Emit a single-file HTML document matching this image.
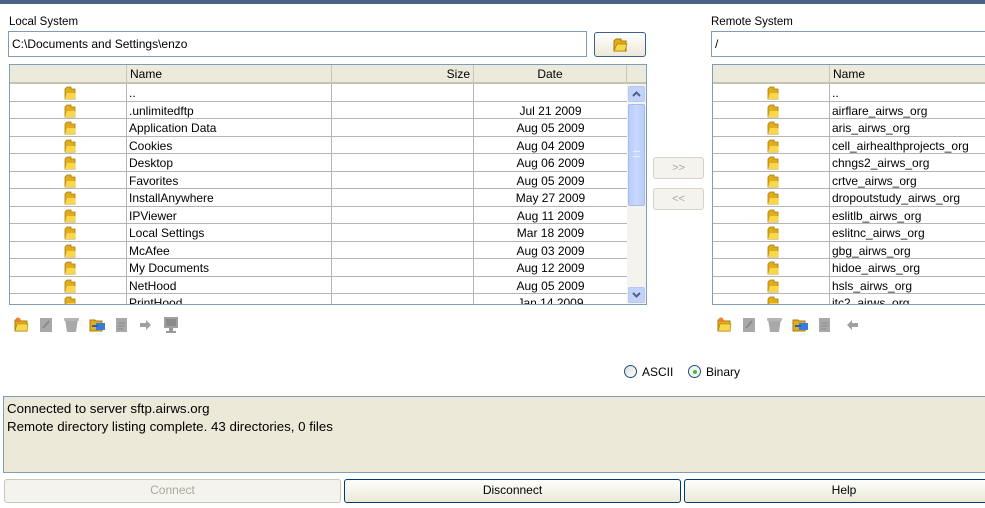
<!DOCTYPE html>
<html><head><meta charset="utf-8"><style>
*{box-sizing:border-box;margin:0;padding:0}
body{width:985px;height:508px;background:#fff;font-family:"Liberation Sans",sans-serif;font-size:12px;color:#000;position:relative;overflow:hidden}
.a{position:absolute}
.topbar{left:0;top:0;width:985px;height:4px;background:#4a6286}
.lbl{font-size:11.5px}
.inp{border:1px solid #7f9db9;background:#fff;height:26px;padding:5px 3px;font-size:12px}
.tbl{border:1px solid #7f9db9;background:#fff;overflow:hidden}
.hdr{position:absolute;top:0;height:19px;background:#ebeadb;border-right:1px solid #c8c5b4;border-bottom:2px solid #c5c2b2;font-size:12px;line-height:18px}
.row{position:absolute;left:0;height:17.5px;border-bottom:1px solid #b5b5b5;font-size:12px;line-height:18px}
.c{position:absolute;top:0;height:100%;border-right:1px solid #b5b5b5;white-space:nowrap;overflow:hidden}
.fold{position:absolute;top:1px;width:15px;height:15px}
.btn{border:1px solid #003c74;border-radius:3px;background:linear-gradient(#fefefd,#ece9d8);text-align:center;font-size:12px;line-height:21px}
</style></head><body>
<div class="a topbar"></div>
<div class="a lbl" style="left:9px;top:16px">Local System</div>
<div class="a inp" style="left:8px;top:31px;width:579px">C:\Documents and Settings\enzo</div>
<div class="a btn" style="left:594px;top:32px;width:52px;height:25px;border-color:#3d5f8a">
<svg width="16" height="15" viewBox="0 0 16 15" style="margin-top:4px"><path d="M2 4l2-2h5v2h5v10H2z" fill="#e0ad1c" stroke="#a87b08"/><path d="M2 14l3-7h10l-2 7z" fill="#f8d84a" stroke="#a87b08" stroke-width=".7"/></svg></div>

<div class="a lbl" style="left:711px;top:16px">Remote System</div>
<div class="a inp" style="left:711px;top:31px;width:280px">/</div>

<!-- local table -->
<div class="a tbl" style="left:9px;top:64px;width:638px;height:241px">
<div class="hdr" style="left:0;width:117px"></div>
<div class="hdr" style="left:117px;width:205px;padding-left:3px">Name</div>
<div class="hdr" style="left:322px;width:142px;text-align:right;padding-right:3px">Size</div>
<div class="hdr" style="left:464px;width:153px;text-align:center">Date</div>
<div class="hdr" style="left:617px;width:20px;border-right:none"></div>
<div class="a" style="left:0;top:19px;width:617px;height:222px">
<div class="row" style="top:0;width:617px"><div class="c" style="left:0;width:117px"><svg class="fold" style="left:52px" viewBox="0 0 15 15"><path d="M3 4l2-2h4v2h4v10H3z" fill="#e0ad1c" stroke="#a87b08" stroke-width=".8"/><path d="M3 14l2-6h9l-1 6z" fill="#f8d84a"/></svg></div><div class="c" style="left:117px;width:205px;padding-left:2px">..</div><div class="c" style="left:322px;width:142px"></div><div class="c" style="left:464px;width:153px;text-align:center;border-right:none"></div></div>
<div class="row" style="top:17.5px;width:617px"><div class="c" style="left:0;width:117px"><svg class="fold" style="left:52px" viewBox="0 0 15 15"><path d="M3 4l2-2h4v2h4v10H3z" fill="#e0ad1c" stroke="#a87b08" stroke-width=".8"/><path d="M3 14l2-6h9l-1 6z" fill="#f8d84a"/></svg></div><div class="c" style="left:117px;width:205px;padding-left:2px">.unlimitedftp</div><div class="c" style="left:322px;width:142px"></div><div class="c" style="left:464px;width:153px;text-align:center;border-right:none">Jul 21 2009</div></div>
<div class="row" style="top:35px;width:617px"><div class="c" style="left:0;width:117px"><svg class="fold" style="left:52px" viewBox="0 0 15 15"><path d="M3 4l2-2h4v2h4v10H3z" fill="#e0ad1c" stroke="#a87b08" stroke-width=".8"/><path d="M3 14l2-6h9l-1 6z" fill="#f8d84a"/></svg></div><div class="c" style="left:117px;width:205px;padding-left:2px">Application Data</div><div class="c" style="left:322px;width:142px"></div><div class="c" style="left:464px;width:153px;text-align:center;border-right:none">Aug 05 2009</div></div>
<div class="row" style="top:52.5px;width:617px"><div class="c" style="left:0;width:117px"><svg class="fold" style="left:52px" viewBox="0 0 15 15"><path d="M3 4l2-2h4v2h4v10H3z" fill="#e0ad1c" stroke="#a87b08" stroke-width=".8"/><path d="M3 14l2-6h9l-1 6z" fill="#f8d84a"/></svg></div><div class="c" style="left:117px;width:205px;padding-left:2px">Cookies</div><div class="c" style="left:322px;width:142px"></div><div class="c" style="left:464px;width:153px;text-align:center;border-right:none">Aug 04 2009</div></div>
<div class="row" style="top:70px;width:617px"><div class="c" style="left:0;width:117px"><svg class="fold" style="left:52px" viewBox="0 0 15 15"><path d="M3 4l2-2h4v2h4v10H3z" fill="#e0ad1c" stroke="#a87b08" stroke-width=".8"/><path d="M3 14l2-6h9l-1 6z" fill="#f8d84a"/></svg></div><div class="c" style="left:117px;width:205px;padding-left:2px">Desktop</div><div class="c" style="left:322px;width:142px"></div><div class="c" style="left:464px;width:153px;text-align:center;border-right:none">Aug 06 2009</div></div>
<div class="row" style="top:87.5px;width:617px"><div class="c" style="left:0;width:117px"><svg class="fold" style="left:52px" viewBox="0 0 15 15"><path d="M3 4l2-2h4v2h4v10H3z" fill="#e0ad1c" stroke="#a87b08" stroke-width=".8"/><path d="M3 14l2-6h9l-1 6z" fill="#f8d84a"/></svg></div><div class="c" style="left:117px;width:205px;padding-left:2px">Favorites</div><div class="c" style="left:322px;width:142px"></div><div class="c" style="left:464px;width:153px;text-align:center;border-right:none">Aug 05 2009</div></div>
<div class="row" style="top:105px;width:617px"><div class="c" style="left:0;width:117px"><svg class="fold" style="left:52px" viewBox="0 0 15 15"><path d="M3 4l2-2h4v2h4v10H3z" fill="#e0ad1c" stroke="#a87b08" stroke-width=".8"/><path d="M3 14l2-6h9l-1 6z" fill="#f8d84a"/></svg></div><div class="c" style="left:117px;width:205px;padding-left:2px">InstallAnywhere</div><div class="c" style="left:322px;width:142px"></div><div class="c" style="left:464px;width:153px;text-align:center;border-right:none">May 27 2009</div></div>
<div class="row" style="top:122.5px;width:617px"><div class="c" style="left:0;width:117px"><svg class="fold" style="left:52px" viewBox="0 0 15 15"><path d="M3 4l2-2h4v2h4v10H3z" fill="#e0ad1c" stroke="#a87b08" stroke-width=".8"/><path d="M3 14l2-6h9l-1 6z" fill="#f8d84a"/></svg></div><div class="c" style="left:117px;width:205px;padding-left:2px">IPViewer</div><div class="c" style="left:322px;width:142px"></div><div class="c" style="left:464px;width:153px;text-align:center;border-right:none">Aug 11 2009</div></div>
<div class="row" style="top:140px;width:617px"><div class="c" style="left:0;width:117px"><svg class="fold" style="left:52px" viewBox="0 0 15 15"><path d="M3 4l2-2h4v2h4v10H3z" fill="#e0ad1c" stroke="#a87b08" stroke-width=".8"/><path d="M3 14l2-6h9l-1 6z" fill="#f8d84a"/></svg></div><div class="c" style="left:117px;width:205px;padding-left:2px">Local Settings</div><div class="c" style="left:322px;width:142px"></div><div class="c" style="left:464px;width:153px;text-align:center;border-right:none">Mar 18 2009</div></div>
<div class="row" style="top:157.5px;width:617px"><div class="c" style="left:0;width:117px"><svg class="fold" style="left:52px" viewBox="0 0 15 15"><path d="M3 4l2-2h4v2h4v10H3z" fill="#e0ad1c" stroke="#a87b08" stroke-width=".8"/><path d="M3 14l2-6h9l-1 6z" fill="#f8d84a"/></svg></div><div class="c" style="left:117px;width:205px;padding-left:2px">McAfee</div><div class="c" style="left:322px;width:142px"></div><div class="c" style="left:464px;width:153px;text-align:center;border-right:none">Aug 03 2009</div></div>
<div class="row" style="top:175px;width:617px"><div class="c" style="left:0;width:117px"><svg class="fold" style="left:52px" viewBox="0 0 15 15"><path d="M3 4l2-2h4v2h4v10H3z" fill="#e0ad1c" stroke="#a87b08" stroke-width=".8"/><path d="M3 14l2-6h9l-1 6z" fill="#f8d84a"/></svg></div><div class="c" style="left:117px;width:205px;padding-left:2px">My Documents</div><div class="c" style="left:322px;width:142px"></div><div class="c" style="left:464px;width:153px;text-align:center;border-right:none">Aug 12 2009</div></div>
<div class="row" style="top:192.5px;width:617px"><div class="c" style="left:0;width:117px"><svg class="fold" style="left:52px" viewBox="0 0 15 15"><path d="M3 4l2-2h4v2h4v10H3z" fill="#e0ad1c" stroke="#a87b08" stroke-width=".8"/><path d="M3 14l2-6h9l-1 6z" fill="#f8d84a"/></svg></div><div class="c" style="left:117px;width:205px;padding-left:2px">NetHood</div><div class="c" style="left:322px;width:142px"></div><div class="c" style="left:464px;width:153px;text-align:center;border-right:none">Aug 05 2009</div></div>
<div class="row" style="top:210px;width:617px"><div class="c" style="left:0;width:117px"><svg class="fold" style="left:52px" viewBox="0 0 15 15"><path d="M3 4l2-2h4v2h4v10H3z" fill="#e0ad1c" stroke="#a87b08" stroke-width=".8"/><path d="M3 14l2-6h9l-1 6z" fill="#f8d84a"/></svg></div><div class="c" style="left:117px;width:205px;padding-left:2px">PrintHood</div><div class="c" style="left:322px;width:142px"></div><div class="c" style="left:464px;width:153px;text-align:center;border-right:none">Jan 14 2009</div></div>
</div>
<!-- scrollbar -->
<div class="a" style="left:617px;top:19px;width:20px;height:222px;background:#f4f3ee"></div>
<div class="a" style="left:618px;top:21px;width:17px;height:16px;background:#c1d3fb;border:1px solid #b4c8f6;border-radius:2px"><svg width="15" height="14" viewBox="0 0 15 14"><path d="M4 9l3.5-3.5L11 9" fill="none" stroke="#4d6185" stroke-width="2"/></svg></div>
<div class="a" style="left:618px;top:39px;width:17px;height:102px;background:linear-gradient(90deg,#b8cdf9,#c9d9fd,#b8cdf9);border:1px solid #a6bcee;border-radius:2px"><div style="position:absolute;left:4px;top:46px;width:7px;height:6px;border-top:1px solid #e8efff;border-bottom:1px solid #e8efff"></div></div>
<div class="a" style="left:618px;top:222px;width:17px;height:16px;background:#c1d3fb;border:1px solid #b4c8f6;border-radius:2px"><svg width="15" height="14" viewBox="0 0 15 14"><path d="M4 5l3.5 3.5L11 5" fill="none" stroke="#4d6185" stroke-width="2"/></svg></div>
</div>

<!-- transfer buttons -->
<div class="a" style="left:653px;top:157px;width:51px;height:22px;border:1px solid #d6d3c6;border-radius:3px;background:#f4f3ee;color:#aca899;text-align:center;line-height:20px;font-size:11px">&gt;&gt;</div>
<div class="a" style="left:653px;top:188px;width:51px;height:22px;border:1px solid #d6d3c6;border-radius:3px;background:#f4f3ee;color:#aca899;text-align:center;line-height:20px;font-size:11px">&lt;&lt;</div>

<!-- remote table -->
<div class="a tbl" style="left:712px;top:64px;width:290px;height:241px">
<div class="hdr" style="left:0;width:117px"></div>
<div class="hdr" style="left:117px;width:180px;padding-left:3px">Name</div>
<div class="a" style="left:0;top:19px;width:290px;height:222px">
<div class="row" style="top:0;width:290px"><div class="c" style="left:0;width:117px"><svg class="fold" style="left:52px" viewBox="0 0 15 15"><path d="M3 4l2-2h4v2h4v10H3z" fill="#e0ad1c" stroke="#a87b08" stroke-width=".8"/><path d="M3 14l2-6h9l-1 6z" fill="#f8d84a"/></svg></div><div class="c" style="left:117px;width:180px;padding-left:2px">..</div></div>
<div class="row" style="top:17.5px;width:290px"><div class="c" style="left:0;width:117px"><svg class="fold" style="left:52px" viewBox="0 0 15 15"><path d="M3 4l2-2h4v2h4v10H3z" fill="#e0ad1c" stroke="#a87b08" stroke-width=".8"/><path d="M3 14l2-6h9l-1 6z" fill="#f8d84a"/></svg></div><div class="c" style="left:117px;width:180px;padding-left:2px">airflare_airws_org</div></div>
<div class="row" style="top:35px;width:290px"><div class="c" style="left:0;width:117px"><svg class="fold" style="left:52px" viewBox="0 0 15 15"><path d="M3 4l2-2h4v2h4v10H3z" fill="#e0ad1c" stroke="#a87b08" stroke-width=".8"/><path d="M3 14l2-6h9l-1 6z" fill="#f8d84a"/></svg></div><div class="c" style="left:117px;width:180px;padding-left:2px">aris_airws_org</div></div>
<div class="row" style="top:52.5px;width:290px"><div class="c" style="left:0;width:117px"><svg class="fold" style="left:52px" viewBox="0 0 15 15"><path d="M3 4l2-2h4v2h4v10H3z" fill="#e0ad1c" stroke="#a87b08" stroke-width=".8"/><path d="M3 14l2-6h9l-1 6z" fill="#f8d84a"/></svg></div><div class="c" style="left:117px;width:180px;padding-left:2px">cell_airhealthprojects_org</div></div>
<div class="row" style="top:70px;width:290px"><div class="c" style="left:0;width:117px"><svg class="fold" style="left:52px" viewBox="0 0 15 15"><path d="M3 4l2-2h4v2h4v10H3z" fill="#e0ad1c" stroke="#a87b08" stroke-width=".8"/><path d="M3 14l2-6h9l-1 6z" fill="#f8d84a"/></svg></div><div class="c" style="left:117px;width:180px;padding-left:2px">chngs2_airws_org</div></div>
<div class="row" style="top:87.5px;width:290px"><div class="c" style="left:0;width:117px"><svg class="fold" style="left:52px" viewBox="0 0 15 15"><path d="M3 4l2-2h4v2h4v10H3z" fill="#e0ad1c" stroke="#a87b08" stroke-width=".8"/><path d="M3 14l2-6h9l-1 6z" fill="#f8d84a"/></svg></div><div class="c" style="left:117px;width:180px;padding-left:2px">crtve_airws_org</div></div>
<div class="row" style="top:105px;width:290px"><div class="c" style="left:0;width:117px"><svg class="fold" style="left:52px" viewBox="0 0 15 15"><path d="M3 4l2-2h4v2h4v10H3z" fill="#e0ad1c" stroke="#a87b08" stroke-width=".8"/><path d="M3 14l2-6h9l-1 6z" fill="#f8d84a"/></svg></div><div class="c" style="left:117px;width:180px;padding-left:2px">dropoutstudy_airws_org</div></div>
<div class="row" style="top:122.5px;width:290px"><div class="c" style="left:0;width:117px"><svg class="fold" style="left:52px" viewBox="0 0 15 15"><path d="M3 4l2-2h4v2h4v10H3z" fill="#e0ad1c" stroke="#a87b08" stroke-width=".8"/><path d="M3 14l2-6h9l-1 6z" fill="#f8d84a"/></svg></div><div class="c" style="left:117px;width:180px;padding-left:2px">eslitlb_airws_org</div></div>
<div class="row" style="top:140px;width:290px"><div class="c" style="left:0;width:117px"><svg class="fold" style="left:52px" viewBox="0 0 15 15"><path d="M3 4l2-2h4v2h4v10H3z" fill="#e0ad1c" stroke="#a87b08" stroke-width=".8"/><path d="M3 14l2-6h9l-1 6z" fill="#f8d84a"/></svg></div><div class="c" style="left:117px;width:180px;padding-left:2px">eslitnc_airws_org</div></div>
<div class="row" style="top:157.5px;width:290px"><div class="c" style="left:0;width:117px"><svg class="fold" style="left:52px" viewBox="0 0 15 15"><path d="M3 4l2-2h4v2h4v10H3z" fill="#e0ad1c" stroke="#a87b08" stroke-width=".8"/><path d="M3 14l2-6h9l-1 6z" fill="#f8d84a"/></svg></div><div class="c" style="left:117px;width:180px;padding-left:2px">gbg_airws_org</div></div>
<div class="row" style="top:175px;width:290px"><div class="c" style="left:0;width:117px"><svg class="fold" style="left:52px" viewBox="0 0 15 15"><path d="M3 4l2-2h4v2h4v10H3z" fill="#e0ad1c" stroke="#a87b08" stroke-width=".8"/><path d="M3 14l2-6h9l-1 6z" fill="#f8d84a"/></svg></div><div class="c" style="left:117px;width:180px;padding-left:2px">hidoe_airws_org</div></div>
<div class="row" style="top:192.5px;width:290px"><div class="c" style="left:0;width:117px"><svg class="fold" style="left:52px" viewBox="0 0 15 15"><path d="M3 4l2-2h4v2h4v10H3z" fill="#e0ad1c" stroke="#a87b08" stroke-width=".8"/><path d="M3 14l2-6h9l-1 6z" fill="#f8d84a"/></svg></div><div class="c" style="left:117px;width:180px;padding-left:2px">hsls_airws_org</div></div>
<div class="row" style="top:210px;width:290px"><div class="c" style="left:0;width:117px"><svg class="fold" style="left:52px" viewBox="0 0 15 15"><path d="M3 4l2-2h4v2h4v10H3z" fill="#e0ad1c" stroke="#a87b08" stroke-width=".8"/><path d="M3 14l2-6h9l-1 6z" fill="#f8d84a"/></svg></div><div class="c" style="left:117px;width:180px;padding-left:2px">itc2_airws_org</div></div>
</div>
</div>

<!-- local toolbar -->
<svg class="a" style="left:12px;top:314px" width="175" height="20" viewBox="0 0 175 20">
<path d="M3 6h5l1 1h6v10H3z" fill="#e0ad1c" stroke="#a87b08"/><path d="M3 17l2-7h11l-1 7z" fill="#f8d84a" stroke="#a87b08" stroke-width=".6"/><circle cx="6" cy="6" r="2.5" fill="#f08030"/>
<rect x="28" y="4" width="12" height="14" fill="#a9a9a9"/><path d="M31 14l6-7" stroke="#8a8a8a" stroke-width="2"/>
<path d="M53 5h13l-2 13h-9z" fill="#a9a9a9"/><rect x="52" y="4" width="15" height="3" rx="1" fill="#b5b5b5"/>
<path d="M78 6h5l1 1h6v10H78z" fill="#e0ad1c" stroke="#a87b08"/><rect x="84" y="9" width="9" height="7" fill="#3a7ad8"/><path d="M80 12h6" stroke="#2060c0" stroke-width="2"/>
<rect x="104" y="4" width="11" height="14" fill="#a9a9a9"/><path d="M106 9h7M106 12h7M106 15h5" stroke="#8a8a8a"/>
<path d="M128 9h6V6l5 5-5 5v-3h-6z" fill="#a0a0a0"/>
<rect x="152" y="3" width="14" height="11" fill="#a0a0a0"/><rect x="154" y="5" width="10" height="7" fill="#8a8a8a"/><rect x="157" y="14" width="4" height="3" fill="#999"/><rect x="154" y="17" width="10" height="2" fill="#999"/>
</svg>
<!-- remote toolbar -->
<svg class="a" style="left:715px;top:314px" width="150" height="20" viewBox="0 0 150 20">
<path d="M3 6h5l1 1h6v10H3z" fill="#e0ad1c" stroke="#a87b08"/><path d="M3 17l2-7h11l-1 7z" fill="#f8d84a" stroke="#a87b08" stroke-width=".6"/><circle cx="6" cy="6" r="2.5" fill="#f08030"/>
<rect x="28" y="4" width="12" height="14" fill="#a9a9a9"/><path d="M31 14l6-7" stroke="#8a8a8a" stroke-width="2"/>
<path d="M53 5h13l-2 13h-9z" fill="#a9a9a9"/><rect x="52" y="4" width="15" height="3" rx="1" fill="#b5b5b5"/>
<path d="M78 6h5l1 1h6v10H78z" fill="#e0ad1c" stroke="#a87b08"/><rect x="84" y="9" width="9" height="7" fill="#3a7ad8"/><path d="M80 12h6" stroke="#2060c0" stroke-width="2"/>
<rect x="104" y="4" width="11" height="14" fill="#a9a9a9"/><path d="M106 9h7M106 12h7M106 15h5" stroke="#8a8a8a"/>
<path d="M143 9h-6V6l-5 5 5 5v-3h6z" fill="#a0a0a0"/>
</svg>

<!-- radios -->
<div class="a" style="left:624px;top:365px;width:13px;height:13px;border:1px solid #1c5180;border-radius:50%;background:linear-gradient(135deg,#dcdcd6,#fff)"></div>
<div class="a" style="left:642px;top:365px;font-size:12px">ASCII</div>
<div class="a" style="left:688px;top:365px;width:13px;height:13px;border:1px solid #1c5180;border-radius:50%;background:#f4f3ee"><div style="position:absolute;left:3.5px;top:3.5px;width:4px;height:4px;border-radius:50%;background:#3dbb3d"></div></div>
<div class="a" style="left:706px;top:365px;font-size:12px">Binary</div>

<!-- log -->
<div class="a" style="left:3px;top:396px;width:985px;height:77px;background:#ece9d8;border:1px solid #7f9db9;padding:3px 3px;font-size:13.3px;line-height:18px">Connected to server sftp.airws.org<br>Remote directory listing complete. 43 directories, 0 files</div>

<!-- bottom buttons -->
<div class="a btn" style="left:4px;top:479px;width:337px;height:24px;border-color:#c9c7ba;color:#aca899;background:#f4f3ee">Connect</div>
<div class="a btn" style="left:344px;top:479px;width:337px;height:24px">Disconnect</div>
<div class="a btn" style="left:684px;top:479px;width:320px;height:24px">Help</div>
</body></html>
